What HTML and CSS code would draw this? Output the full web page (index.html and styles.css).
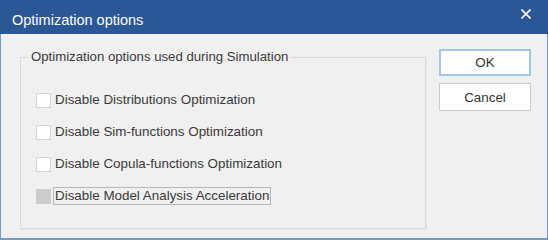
FILE: index.html
```html
<!DOCTYPE html>
<html lang="en">
<head>
    <meta charset="UTF-8">
    <title>Optimization options</title>
    <link rel="stylesheet" href="styles.css">
</head>
<body>
    <div class="window">
        <!-- Title bar -->
        <div class="title-bar">
            <span class="title">Optimization options</span>
            <svg class="close" width="10" height="10" viewBox="0 0 10 10">
                <path d="M0.5 0.5 L9.5 9.5 M9.5 0.5 L0.5 9.5" stroke="#ffffff" stroke-width="1.6" fill="none"/>
            </svg>
        </div>

        <div class="content">
            <fieldset class="group">
                <legend>Optimization options used during Simulation</legend>
                <div class="option">
                    <span class="check"></span>
                    <span class="label">Disable Distributions Optimization</span>
                </div>
                <div class="option">
                    <span class="check"></span>
                    <span class="label">Disable Sim-functions Optimization</span>
                </div>
                <div class="option">
                    <span class="check"></span>
                    <span class="label">Disable Copula-functions Optimization</span>
                </div>
                <div class="option">
                    <span class="check disabled"></span>
                    <span class="label focused">Disable Model Analysis Acceleration</span>
                </div>
            </fieldset>

            <div class="buttons">
                <button class="default">OK</button>
                <button>Cancel</button>
            </div>
        </div>
    </div>
</body>
</html>
```

FILE: styles.css
```css
body {
    margin: 0;
    font-family: "Liberation Sans", Arial, sans-serif;
    color: #3a3a3a;
}

.window {
    width: 548px;
    height: 240px;
    box-sizing: border-box;
    background: #f0f0f0;
    border: 1px solid #6a9bd1;
    border-top: none;
    border-bottom-width: 2px;
    display: flex;
    flex-direction: column;
}

.title-bar {
    height: 34px;
    margin: 0 -1px;
    background: #2b5797;
    color: #ffffff;
    display: flex;
    justify-content: space-between;
    align-items: flex-start;
    padding: 0 17px 0 12px;
    box-sizing: border-box;
}

.title {
    font-size: 14.5px;
    line-height: 17px;
    padding-top: 12px;
}

.close {
    margin-top: 9px;
}

.content {
    display: flex;
    align-items: flex-start;
    padding: 15px 15px 0 19px;
}

.group {
    width: 406px;
    height: 180px;
    box-sizing: border-box;
    margin: 0;
    padding: 19px 0 0 0;
    border: 1px solid #d9d9d9;
    box-shadow: 1px 1px 0 #e6e6e6;
}

.group legend {
    font-size: 13.2px;
    line-height: 16px;
    padding: 0 2px;
    margin-left: 8px;
}

.option {
    height: 32px;
    display: flex;
    align-items: center;
    padding-left: 15px;
    font-size: 13.4px;
}

.check {
    width: 15px;
    height: 15px;
    box-sizing: border-box;
    background: #ffffff;
    border: 1px solid #d4d4d4;
    margin-right: 2px;
}

.check.disabled {
    background: #cccccc;
    border-color: #cccccc;
}

.label {
    padding: 1px 1px 1px 1px;
    border: 1px solid transparent;
    line-height: 14px;
}

.label.focused {
    border-color: #b8b8b8;
}

.buttons {
    margin-left: 13px;
    display: flex;
    flex-direction: column;
    gap: 7px;
}

.buttons button {
    width: 92px;
    height: 28px;
    font-family: inherit;
    font-size: 13.4px;
    color: #333333;
    background: #ffffff;
    border: 1px solid #cccccc;
    padding: 0;
}

.buttons button.default {
    height: 27px;
    border: 2px solid #a3c5ec;
}
```
